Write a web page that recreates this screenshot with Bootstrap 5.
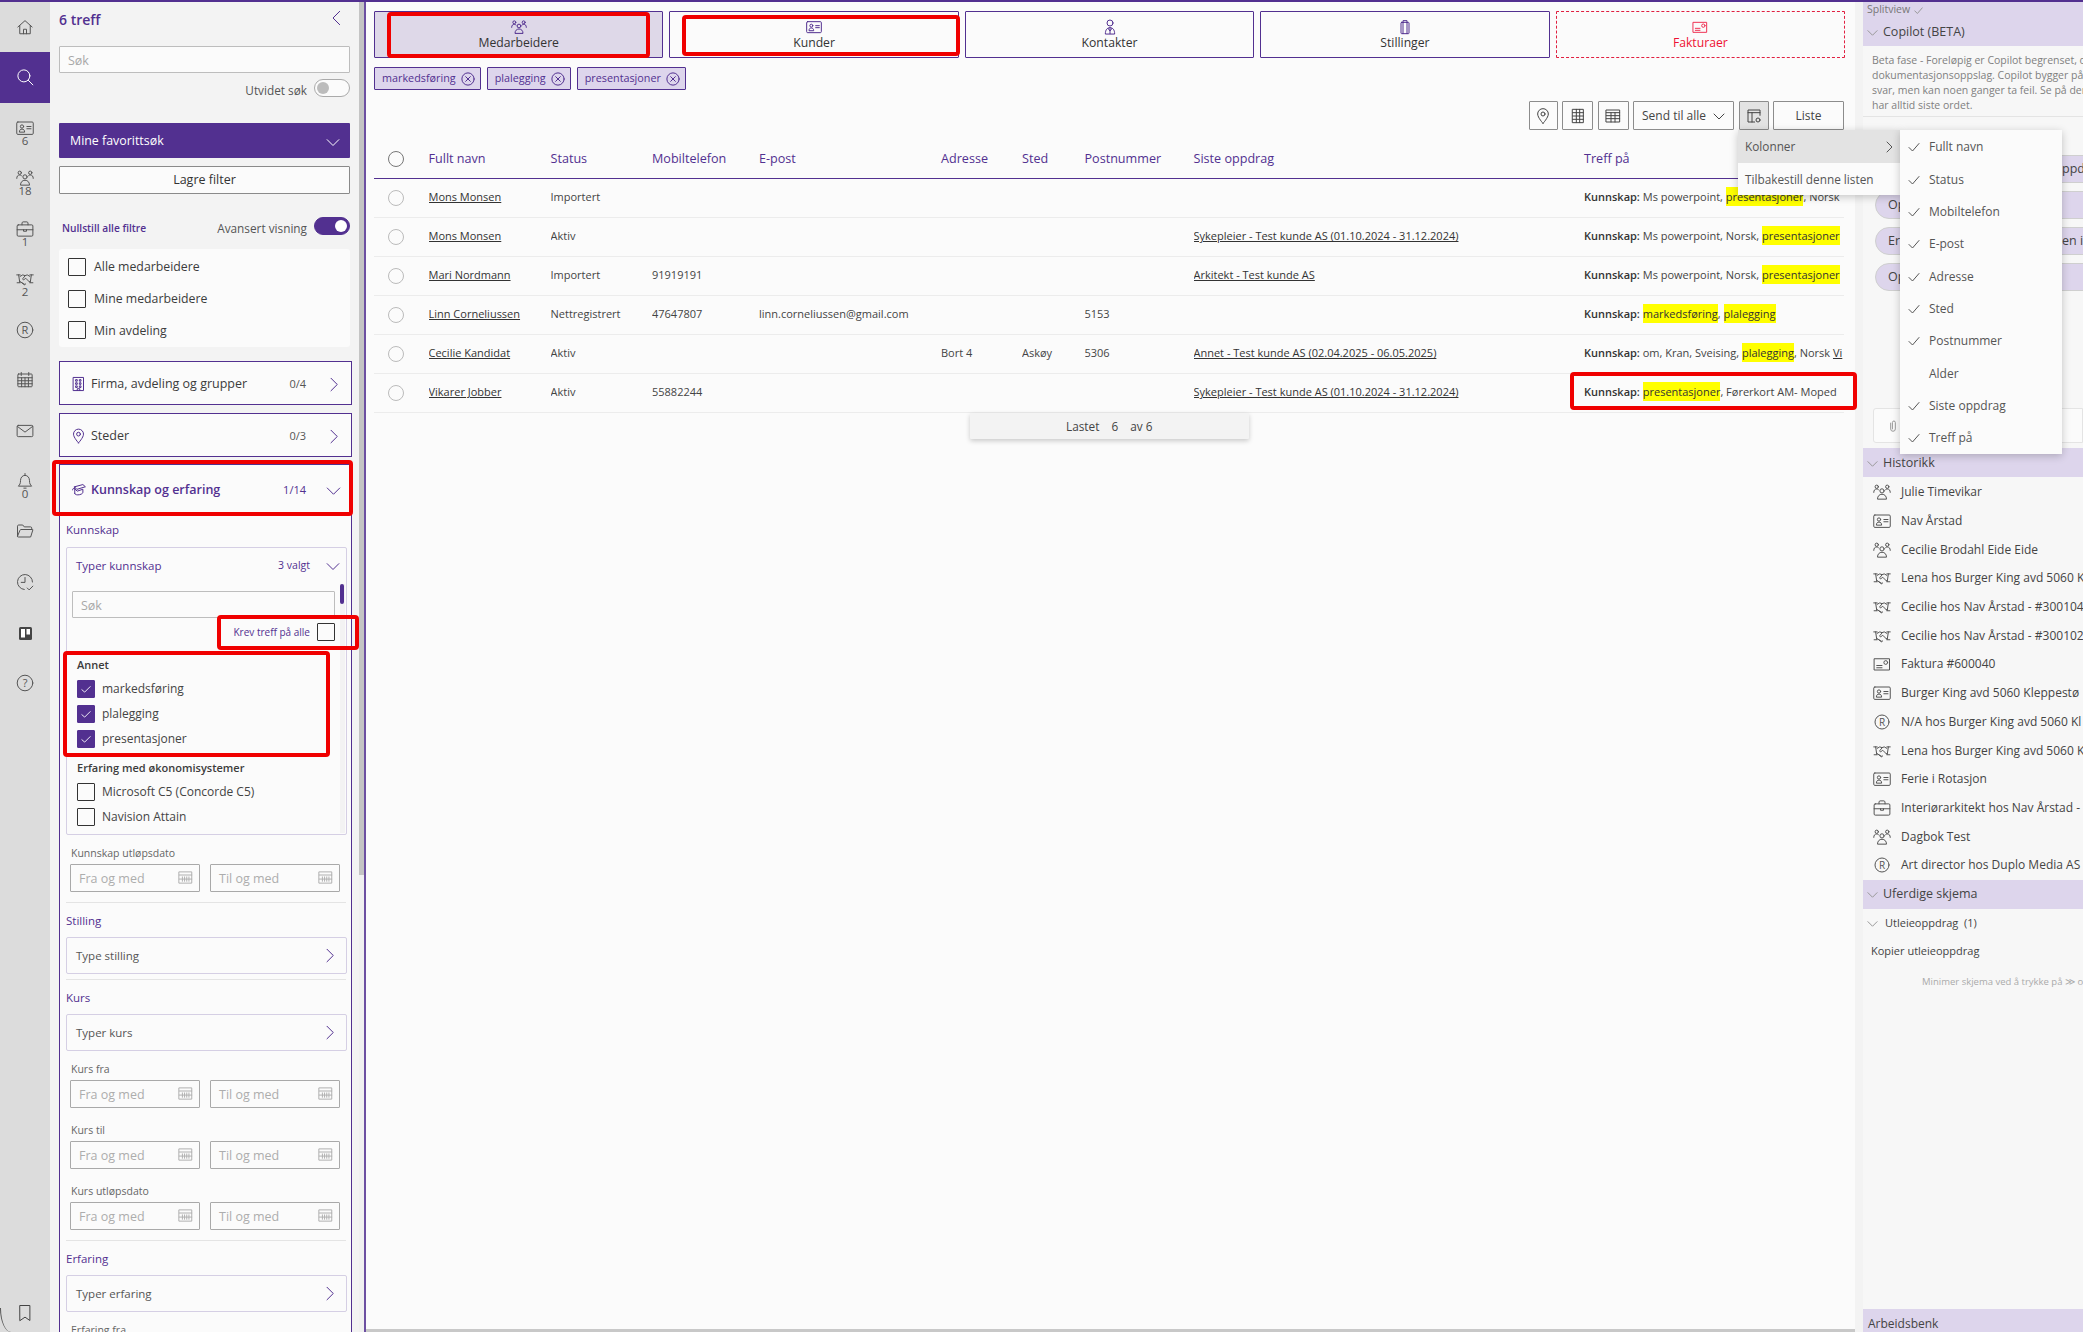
<!DOCTYPE html>
<html lang="nb">
<head>
<meta charset="UTF-8">
<title>Søk</title>
<link href="https://cdn.jsdelivr.net/npm/bootstrap@5.3.3/dist/css/bootstrap.min.css" rel="stylesheet">
<style>
:root { --lilla: #523090; --lilla-lys: #ddd5ec; --tekst: #3c3c3c; }
html, body { height: 100%; }
body { font-family: "Open Sans", "Noto Sans", sans-serif; font-size: 12px; color: var(--tekst); background: #fbfbfb; overflow: hidden; }
svg.ic { fill: none; stroke: currentColor; stroke-width: 1; stroke-linecap: round; stroke-linejoin: round; flex: none; }
symbol path, symbol circle, symbol rect, svg.ic circle { vector-effect: non-scaling-stroke; }
.app-shell { position: relative; width: 2083px; height: 1332px; border-top: 2px solid var(--lilla); overflow: hidden; }

/* venstre meny */
.rail { width: 50px; flex: none; background: #dcdcdc; color: #444; position: relative; }
.rail::after { content: ""; position: absolute; left: 0; bottom: 0; width: 12px; height: 24px; border-left: 1px solid #555; border-bottom-left-radius: 12px 26px; }
.rail-item { height: 50.45px; padding-top: 16px; font-size: 11.5px; line-height: 12px; color: #555; }
.rail-item span { margin-top: -2px; }
.rail-item.active { background: var(--lilla); color: #fff; }
.rail-bottom { margin-top: auto; height: 28px; }

/* filterpanel */
.filter-panel { width: 309px; flex: none; background: #f3f3f3; padding-left: 9px; height: 1330px; overflow: hidden; }
.filter-scroll { width: 5px; flex: none; background: #f0f0f0; position: relative; }
.filter-scroll::before { content: ""; display: block; height: 873px; background: #c4c4c4; }
.filter-line { width: 2px; flex: none; background: var(--lilla); opacity: .85; }
.filter-inner { width: 293px; }
.filter-head { height: 44px; padding-top: 8px; padding-right: 5px; width: 291px; color: var(--lilla); font-size: 14px; font-weight: 600; line-height: 20px; }
.form-control.fs-input { height: 27px; min-height: 0; border-radius: 1px; border: 1px solid #bdbdbd; background: #fbfbfb; font-size: 12.5px; padding: 1px 8px 0; }
.form-control.fs-input::placeholder { color: #a8a8a8; }
.fs-width { width: 291px; }
.switch-row { height: 18px; gap: 7px; font-size: 11.8px; color: #555; }
.sw-first { margin-top: 9px; }
.sw-second { margin-top: 26px; }
.form-switch .form-check-input.fs-switch { width: 36px; height: 18px; margin: 0; float: none; background-color: #fbfbfb; border: 1px solid #aaa; }
.form-switch .form-check-input.fs-switch:checked { background-color: var(--lilla); border-color: var(--lilla); }
.btn.fav-btn { height: 35px; margin-top: 23px; background: var(--lilla); color: #fff; border: 0; border-radius: 1px; font-size: 12.4px; font-weight: 500; padding: 2px 10px 0 11px; }
.btn.save-btn { height: 28px; background: #fbfbfb; color: #333; border: 1px solid #8a8a8a; border-radius: 1px; font-size: 12.5px; font-weight: 500; padding: 1px 0 0; margin-top: 8px; }
.reset-link { color: var(--lilla); font-size: 10.2px; font-weight: 600; padding-left: 3px; text-decoration: none; }
.check-card { height: 98px; background: #fbfbfb; border-radius: 3px; padding: 2px 9px; margin-top: 11px; }
.form-check-input.fs-check { width: 18px; height: 18px; margin: 0; float: none; border: 1px solid #333; border-radius: 1px; background-color: #fbfbfb; flex: none; }
.form-check-input.fs-check:checked { background-color: var(--lilla); border-color: var(--lilla); background-image: url("data:image/svg+xml,%3csvg xmlns='http://www.w3.org/2000/svg' viewBox='0 0 18 18'%3e%3cpath fill='none' stroke='%23fff' d='M4 9.5l3.5 3L14 6'/%3e%3c/svg%3e"); }
.check-row { height: 31.7px; gap: 8px; font-size: 12.3px; padding-top: 1px; }
.check-row input { margin-top: -1px !important; }
.acc-row { height: 44px; border: 1px solid var(--lilla); background: #fbfbfb; padding: 2px 10px 0 11px; font-size: 12.5px; margin-top: 8px; }
.acc-first { margin-top: 14px; }
.acc-count { font-size: 11px; color: #555; width: 30px; text-align: right; margin-right: 20px; }
.acc-open { border: 1px solid var(--lilla); border-bottom: 0; background: #fbfbfb; margin-top: 7px; padding: 0 5px 0 6px; height: 900px; }
.acc-open .acc-head { height: 50px; margin: 0 -5px 0 -6px; padding: 0 10px 0 11px; color: var(--lilla); font-size: 12.5px; font-weight: 600; }
.acc-open .acc-count { color: var(--lilla); font-weight: 400; }
.acc-icon { color: var(--lilla); margin-right: 5px; }
.chev-lilla { color: var(--lilla); }
.sec-title { color: var(--lilla); font-size: 11.5px; font-weight: 500; line-height: 16px; margin-top: 7px; }
.f-box { border: 1px solid #d5cfe4; border-radius: 2px; background: #fbfbfb; margin-top: 8px; width: 281px; }
.f-box-closed { height: 37px; padding: 0 9px 0 9px; font-size: 11.5px; font-weight: 500; color: #555; }
.f-box-open { height: 288px; margin-top: 9px; position: relative; }
.f-box-head { height: 36px; padding: 0 6px 0 9px; color: var(--lilla); font-size: 11.5px; font-weight: 500; }
.f-box-head span:last-of-type { font-size: 10.5px; font-weight: 400; margin-right: 16px; }
.f-track { position: absolute; right: 1px; top: 36px; bottom: 1px; width: 5px; background: #f3f3f3; }
.f-track::before { content: ""; display: block; margin-top: 0; width: 4px; height: 20px; border-radius: 2px; background: var(--lilla); }
.f-body { padding: 7px 0 0 5px; }
.f-body .form-control.fs-input { width: 263px; }
.krev-row { height: 18px; margin-top: 5px; width: 263px; gap: 7px; color: var(--lilla); font-size: 10px; }
.grp-title { font-size: 11px; font-weight: 600; line-height: 16px; padding-left: 5px; }
.grp-first { margin-top: 16px; }
.grp-next { margin-top: 9px; }
.opt-row { height: 25px; gap: 7px; font-size: 12px; padding-left: 5px; color: #444; }
.opt-list { margin-top: 3px; }
.f-label { color: #666; font-size: 10.5px; font-weight: 500; line-height: 16px; margin: 10px 0 0 5px; }
.f-dates { margin: 3px 0 0 4px; gap: 10px; }
.f-date { width: 130px; height: 28px; border: 1px solid #a9a9a9; border-radius: 1px; padding: 2px 6px 0 8px; color: #adadad; font-size: 12.5px; }
.f-date svg { color: #b0b0b0; margin-top: -3px; }
.f-dates + .f-label { margin-top: 14px; }
.f-sep { height: 1px; background: #e4e4e4; width: 280px; margin-top: 10px; }
.f-box + .f-sep { margin-top: 5px; }
.f-sep + .sec-title { margin-top: 10px; }

/* hovedinnhold */
.main-col { width: 1489px; flex: none; padding: 9px 10px 0 8px; background: #fbfbfb; position: relative; }
.tab-row { gap: 6px; }
.tab-btn { flex: 1 1 0; height: 47px; border: 1px solid var(--lilla); border-radius: 1px; background: #fbfbfb; color: #333; font-size: 12.2px; font-weight: 500; padding: 0; line-height: 16px; }
.tab-btn svg { color: var(--lilla); }
.tab-btn.on { background: #ded8e8; }
.tab-btn.tab-red { border: 1px dashed #e02040; color: #ee1133; }
.tab-btn.tab-red svg { color: #ee3355; }
.tag-row { margin-top: 9px; gap: 6px; }
.tag-item { height: 23px; border: 1px solid var(--lilla); background: var(--lilla-lys); color: var(--lilla); border-radius: 1px; padding: 0 5px 0 7px; gap: 5px; font-size: 10.8px; font-weight: 500; }
.tool-row { margin: 11px 1px 0 0; gap: 4.5px; justify-content: flex-end; height: 29px; }
.tool-btn { height: 29px; border: 1px solid #8c8c8c; border-radius: 1px; background: #fbfbfb; color: #444; padding: 0; font-size: 12px; font-weight: 500; }
.tool-btn.on { background: #e3e3e3; }
.tool-pin { width: 29px; }
.tool-sq { width: 31px; }
.tool-send { width: 101px; }
.tool-cols { width: 30px; }
.tool-list { width: 71px; }
.hits-table { table-layout: fixed; width: 1470px; margin: 10px 0 0 0; --bs-table-bg: transparent; font-size: 11px; color: #444; }
.hits-table th { color: var(--lilla); font-weight: 500; height: 38px; padding: 2px 0 0; vertical-align: middle; border-bottom: 1px solid var(--lilla); font-size: 12.6px; white-space: nowrap; }
.hits-table td { height: 39px; padding: 0; vertical-align: middle; border-bottom: 1px solid #ececec; white-space: nowrap; overflow: hidden; }
.hits-table td a { color: #333; }
.radio-dot { display: block; width: 16px; height: 16px; border-radius: 50%; border: 1px solid #bbb; margin-left: 14px; }
th .radio-dot { border-color: #777; margin-top: -2px; }
.hit-mark { background: #ffff00; color: #333; padding: 2px 0; }
.hit-key { font-weight: 600; color: #333; }
.loaded-bar { position: absolute; left: 604px; top: 411px; width: 279px; height: 26px; background: #f3f3f3; box-shadow: 0 2px 5px rgba(0,0,0,.2); font-size: 11.8px; font-weight: 500; color: #444; padding: 1px 0 0 96px; border-radius: 1px; }
.h-scroll { position: absolute; left: 0; right: 0; bottom: 0; height: 3px; background: #c8c8c8; }

/* høyre kolonne */
.gap-strip { width: 8px; flex: none; background: #f3f3f3; }
.side-col { width: 220px; flex: none; background: #f7f7f7; height: 1330px; overflow: hidden; }
.side-head { background: var(--lilla-lys); }
.side-head svg { color: #999; }
.side-head-top { height: 44px; padding-left: 4px; color: #666; }
.side-top-label { height: 16px; font-size: 10.5px; color: #777; gap: 4px; }
.side-title { font-size: 12.5px; color: #444; gap: 5px; padding-top: 1px; }
.copilot-text { height: 71px; padding: 7px 0 0 9px; font-size: 10.5px; line-height: 15px; color: #808080; border-bottom: 1px solid #e4e4e4; white-space: nowrap; }
.chat-area { height: 331px; padding-top: 38px; }
.chat-pills { gap: 8px; padding-left: 12px; }
.chat-pill { height: 28px; width: 300px; border-radius: 14px; border: 1px solid #cfcfcf; background: var(--lilla-lys); padding-left: 12px; font-size: 12.5px; color: #444; white-space: nowrap; }
.chat-pill span:first-child { width: 174px; }
.chat-input { height: 35px; margin: auto 0 5px 10px; border: 1px solid #e4e4e4; background: #fbfbfb; padding-left: 12px; color: #999; border-radius: 3px 0 0 3px; }
.side-bar { height: 29px; padding-left: 4px; }
.hist-list { padding-top: 1px; }
.list-group-item.hist-item { height: 28.7px; padding: 0 0 0 10px; gap: 10px; font-size: 12px; color: #444; white-space: nowrap; border: 0; background: transparent; border-radius: 0; }
.hist-item svg { color: #555; }
.draft-line { font-size: 11px; color: #444; white-space: nowrap; }
.draft-first { height: 29px; padding-left: 4px; gap: 7px; }
.draft-first svg { color: #999; }
.draft-copy { margin-top: 5px; padding-left: 8px; }
.draft-hint { font-size: 9.5px; color: #aaa; white-space: nowrap; padding-left: 59px; margin-top: 16px; }
.work-bar { height: 23px; margin-top: auto; padding: 7px 0 0 5px; font-size: 12px; color: #444; }

/* menyer over innholdet */
.ctx-menu { position: absolute; display: block; margin: 0; padding: 0; border: 0; border-radius: 0; min-width: 0; background: #fbfbfb; box-shadow: 0 2px 8px rgba(0,0,0,.22); }
.ctx-a { left: 1738px; top: 128px; width: 162px; height: 65px; }
.ctx-b { left: 1900px; top: 128px; width: 162px; height: 324px; }
.ctx-a .dropdown-item { height: 32.5px; padding: 2px 5px 0 7px; font-size: 11.8px; color: #555; }
.ctx-a .dropdown-item.on { background: #e3e3e3; }
.ctx-b .dropdown-item { height: 32.35px; padding: 2px 0 0 8px; font-size: 12px; color: #555; gap: 9px; }
.ctx-b .tick-gap { width: 12px; flex: none; }

/* røde markeringer */
.red-mark { position: absolute; border: 4px solid #f00000; border-radius: 4px; pointer-events: none; }
.rm-tab1 { left: 387px; top: 10px; width: 263px; height: 46px; }
.rm-tab2 { left: 682px; top: 13px; width: 278px; height: 41px; }
.rm-hit { left: 1570px; top: 370px; width: 287px; height: 38px; }
.rm-acc { left: 52px; top: 458px; width: 301px; height: 56px; }
.rm-krev { left: 217px; top: 613px; width: 142px; height: 35px; }
.rm-annet { left: 63px; top: 649px; width: 267px; height: 106px; }
</style>
</head>
<body>

<svg width="0" height="0" class="position-absolute">
  <defs>
    <symbol id="i-home" viewBox="0 0 24 24"><path d="M2.500 12L12 3.500 21.500 12M5 10v11h14V10M10 21v-6h4v6"/></symbol>
    <symbol id="i-search" viewBox="0 0 24 24"><circle cx="10.500" cy="10.500" r="8"/><path d="M16.500 16.500l6 6"/></symbol>
    <symbol id="i-card" viewBox="0 0 24 24"><rect x="1" y="4" width="22" height="16.500" rx="1.500"/><circle cx="8" cy="10" r="2.200"/><path d="M4.500 17c0-2.500 1.500-3.500 3.500-3.500s3.500 1 3.500 3.500zM14.500 10h5.500M14.500 13h5.500"/></symbol>
    <symbol id="i-people" viewBox="0 0 24 24"><circle cx="12" cy="10.500" r="2.800"/><path d="M6 21c0-3.500 2.500-6 6-6s6 2.500 6 6z"/><circle cx="5" cy="5" r="2.200"/><path d="M1 12.500c0-3 1.500-4.500 4-4.500 1 0 2 .4 2.600 1.200"/><circle cx="19" cy="5" r="2.200"/><path d="M23 12.500c0-3-1.500-4.500-4-4.500-1 0-2 .4-2.600 1.200"/></symbol>
    <symbol id="i-case" viewBox="0 0 24 24"><rect x="1.500" y="6.500" width="21" height="15" rx="1.500"/><path d="M8 6.500V4C8 3.200 8.700 2.500 9.500 2.500h5c.8 0 1.500.7 1.500 1.500v2.500M1.500 13h21M10 13v2h4v-2"/></symbol>
    <symbol id="i-hands" viewBox="0 0 24 24"><path d="M1 6.500h4.500M3.500 6.500l1.500 10M1.500 17h4M23 6.500h-4.500M20.500 6.500l-1.500 10M22.500 17h-4M5.500 8.500L9 6.500l3 1 3-1 3.500 2M19 15l-1 .5M5 15l6 4.500c1 .7 2-.3 1.500-1.200M8 17l3 2M12 8l-3 3.500c-.6 1 .8 2 1.800 1.200L13 11l5 5"/></symbol>
    <symbol id="i-cal" viewBox="0 0 24 24"><rect x="2.500" y="4" width="19" height="17" rx="1"/><path d="M2.500 9h19M2.500 13h19M2.500 17h19M7.500 9v12M12 9v12M16.500 9v12M7 2v4M17 2v4"/></symbol>
    <symbol id="i-mail" viewBox="0 0 24 24"><rect x="1.500" y="4.500" width="21" height="15" rx="1.500"/><path d="M2 6l10 7.500L22 6"/></symbol>
    <symbol id="i-bell" viewBox="0 0 24 24"><path d="M3.500 18.500c1.500-1.500 2.500-3 2.500-7 0-4 2.500-7 6-7s6 3 6 7c0 4 1 5.500 2.500 7zM12 2v2.500M10.500 21.500h3"/></symbol>
    <symbol id="i-folder" viewBox="0 0 24 24"><path d="M2 19V5.500C2 4.700 2.700 4 3.500 4H9l2 2.500h8.500c.8 0 1.500.7 1.500 1.500v2M2 19.500c0 .5.500.5 1 .5h16.500l3-9.500c.1-.5-.2-.5-.7-.5H6.500c-.5 0-.8.2-1 .6z"/></symbol>
    <symbol id="i-hist" viewBox="0 0 24 24"><path d="M11 22a10 10 0 1 1 11-10M12 6v6.500H7M15 20l2.500 2.500 5-5"/></symbol>
    <symbol id="i-book" viewBox="0 0 24 24"><path d="M5.500 2h13v20L12 17.500 5.500 22z"/></symbol>
    <symbol id="i-build" viewBox="0 0 24 24"><rect x="4" y="1.500" width="16" height="21"/><path d="M8 5h2v2.500H8zM14 5h2v2.500h-2zM8 10h2v2.500H8zM14 10h2v2.500h-2zM8 15h2v2.500H8zM14 15h2v2.500h-2zM10 22.500v-3h4v3"/></symbol>
    <symbol id="i-pin" viewBox="0 0 24 24"><path d="M12 23S4 14.500 4 9a8 8 0 0 1 16 0c0 5.500-8 14-8 14z"/><circle cx="12" cy="9" r="3"/></symbol>
    <symbol id="i-cap" viewBox="0 0 24 24"><path d="M6 6l13-3.500 4 3.500-13 4zM6 6v11M2.500 11c0-2 1.500-3 3.500-3M6 9.500L10 13l9-3v5c0 2-4 4-8 4-3 0-5-1-5-2"/></symbol>
    <symbol id="i-left" viewBox="0 0 24 24"><path d="M16 2L6 12l10 10"/></symbol>
    <symbol id="i-right" viewBox="0 0 24 24"><path d="M8 2l10 10L8 22"/></symbol>
    <symbol id="i-down" viewBox="0 0 24 24"><path d="M2 8l10 10L22 8"/></symbol>
    <symbol id="i-close" viewBox="0 0 24 24"><circle cx="12" cy="12" r="10.500"/><path d="M8 8l8 8M16 8l-8 8"/></symbol>
    <symbol id="i-tick" viewBox="0 0 24 24"><path d="M2 13l7 7L22 5"/></symbol>
    <symbol id="i-minical" viewBox="0 0 24 24"><rect x="2" y="3" width="20" height="18"/><path d="M2 8h20"/><path d="M7 11v7M10.500 11v7M14 11v7M17.500 11v7M2 14.500h20"/></symbol>
    <symbol id="i-grid" viewBox="0 0 24 24"><rect x="4" y="2" width="16" height="20"/><path d="M4 7h16M4 12h16M4 17h16M9.500 2v20M14.500 2v20"/></symbol>
    <symbol id="i-table" viewBox="0 0 24 24"><rect x="2" y="3" width="20" height="18"/><path d="M2 7h20M2 11.500h20M2 16h20M9 7v14M15 7v14"/></symbol>
    <symbol id="i-cols" viewBox="0 0 24 24"><path d="M21 11V3H3v18h10M3 7h18M9 7v14"/><circle cx="18" cy="18" r="3"/></symbol>
    <symbol id="i-clip2" viewBox="0 0 24 24"><path d="M8 7v10a4 4 0 0 0 8 0V6a2.500 2.500 0 0 0-5 0v11"/></symbol>
    <symbol id="i-contact" viewBox="0 0 24 24"><circle cx="12" cy="6" r="4.500"/><path d="M5 22c0-6 3-9 7-9s7 3 7 9zM12 13v9M9 14l3 4 3-4"/></symbol>
    <symbol id="i-clip" viewBox="0 0 24 24"><rect x="6" y="5" width="12" height="17" rx="1"/><path d="M9 5v17M15 5v17M9 5V2.500h6V5"/></symbol>
    <symbol id="i-bill" viewBox="0 0 24 24"><rect x="2" y="5" width="20" height="15"/><path d="M5 14h7M5 17h7"/><circle cx="17" cy="10" r="2.500"/></symbol>
  </defs>
</svg>

<div class="app-shell d-flex">

  <!-- venstre meny -->
  <nav class="rail d-flex flex-column">
    <div class="rail-item d-flex flex-column align-items-center"><svg class="ic" width="18" height="18"><use href="#i-home"/></svg></div>
    <div class="rail-item active d-flex flex-column align-items-center"><svg class="ic" width="18" height="18"><use href="#i-search"/></svg></div>
    <div class="rail-item d-flex flex-column align-items-center"><svg class="ic" width="18" height="18"><use href="#i-card"/></svg><span>6</span></div>
    <div class="rail-item d-flex flex-column align-items-center"><svg class="ic" width="18" height="18"><use href="#i-people"/></svg><span>18</span></div>
    <div class="rail-item d-flex flex-column align-items-center"><svg class="ic" width="18" height="18"><use href="#i-case"/></svg><span>1</span></div>
    <div class="rail-item d-flex flex-column align-items-center"><svg class="ic" width="18" height="18"><use href="#i-hands"/></svg><span>2</span></div>
    <div class="rail-item d-flex flex-column align-items-center"><svg class="ic" width="18" height="18"><circle cx="9" cy="9" r="7.800"/><text x="9" y="13" text-anchor="middle" font-size="11" fill="currentColor" stroke="none">R</text></svg></div>
    <div class="rail-item d-flex flex-column align-items-center"><svg class="ic" width="18" height="18"><use href="#i-cal"/></svg></div>
    <div class="rail-item d-flex flex-column align-items-center"><svg class="ic" width="18" height="18"><use href="#i-mail"/></svg></div>
    <div class="rail-item d-flex flex-column align-items-center"><svg class="ic" width="18" height="18"><use href="#i-bell"/></svg><span>0</span></div>
    <div class="rail-item d-flex flex-column align-items-center"><svg class="ic" width="18" height="18"><use href="#i-folder"/></svg></div>
    <div class="rail-item d-flex flex-column align-items-center"><svg class="ic" width="18" height="18"><use href="#i-hist"/></svg></div>
    <div class="rail-item d-flex flex-column align-items-center"><svg width="13" height="13" class="mt-1"><rect width="13" height="13" rx="1.500" fill="#444"/><rect x="2" y="2" width="4" height="8.500" fill="#fff"/><rect x="7.500" y="2" width="3.500" height="5.500" fill="#fff"/></svg></div>
    <div class="rail-item d-flex flex-column align-items-center"><svg class="ic" width="18" height="18"><circle cx="9" cy="9" r="7.800"/><text x="9" y="13" text-anchor="middle" font-size="11" fill="currentColor" stroke="none">?</text></svg></div>
    <div class="rail-bottom d-flex justify-content-center"><svg class="ic" width="18" height="18"><use href="#i-book"/></svg></div>
  </nav>

  <!-- filter -->
  <aside class="filter-panel">
    <div class="filter-head d-flex justify-content-between">
      <span>6 treff</span>
      <svg class="ic" width="16" height="16"><use href="#i-left"/></svg>
    </div>
    <input type="text" class="form-control fs-input fs-width" placeholder="Søk">
    <div class="switch-row sw-first fs-width d-flex align-items-center justify-content-end">
      <span>Utvidet søk</span>
      <div class="form-check form-switch m-0 p-0 d-flex"><input class="form-check-input fs-switch" type="checkbox"></div>
    </div>
    <button class="btn fav-btn fs-width d-flex align-items-center justify-content-between">Mine favorittsøk <svg class="ic" width="14" height="14"><use href="#i-down"/></svg></button>
    <button class="btn save-btn fs-width d-block">Lagre filter</button>
    <div class="switch-row sw-second fs-width d-flex align-items-center">
      <a href="#" class="reset-link me-auto">Nullstill alle filtre</a>
      <span>Avansert visning</span>
      <div class="form-check form-switch m-0 p-0 d-flex"><input class="form-check-input fs-switch" type="checkbox" checked></div>
    </div>
    <div class="check-card fs-width">
      <label class="check-row d-flex align-items-center"><input class="form-check-input fs-check" type="checkbox">Alle medarbeidere</label>
      <label class="check-row d-flex align-items-center"><input class="form-check-input fs-check" type="checkbox">Mine medarbeidere</label>
      <label class="check-row d-flex align-items-center"><input class="form-check-input fs-check" type="checkbox">Min avdeling</label>
    </div>
    <div class="filter-inner">
      <div class="acc-row acc-first d-flex align-items-center">
        <svg class="ic acc-icon" width="15" height="16"><use href="#i-build"/></svg>
        <span class="me-auto">Firma, avdeling og grupper</span>
        <span class="acc-count">0/4</span>
        <svg class="ic chev-lilla" width="15" height="15"><use href="#i-right"/></svg>
      </div>
      <div class="acc-row d-flex align-items-center">
        <svg class="ic acc-icon" width="15" height="16"><use href="#i-pin"/></svg>
        <span class="me-auto">Steder</span>
        <span class="acc-count">0/3</span>
        <svg class="ic chev-lilla" width="15" height="15"><use href="#i-right"/></svg>
      </div>
      <div class="acc-open">
        <div class="acc-head d-flex align-items-center">
          <svg class="ic acc-icon" width="15" height="15"><use href="#i-cap"/></svg>
          <span class="me-auto">Kunnskap og erfaring</span>
          <span class="acc-count">1/14</span>
          <svg class="ic" width="15" height="15"><use href="#i-down"/></svg>
        </div>
        <div class="sec-title">Kunnskap</div>
        <div class="f-box f-box-open">
          <div class="f-box-head d-flex align-items-center justify-content-between">
            <span class="me-auto">Typer kunnskap</span>
            <span>3 valgt</span>
            <svg class="ic" width="14" height="14"><use href="#i-down"/></svg>
          </div>
          <div class="f-track"></div>
          <div class="f-body">
            <input type="text" class="form-control fs-input" placeholder="Søk">
            <div class="krev-row d-flex align-items-center justify-content-end">Krev treff på alle <input class="form-check-input fs-check" type="checkbox"></div>
            <div class="grp-title grp-first">Annet</div>
            <div class="opt-list">
              <label class="opt-row d-flex align-items-center"><input class="form-check-input fs-check" type="checkbox" checked>markedsføring</label>
              <label class="opt-row d-flex align-items-center"><input class="form-check-input fs-check" type="checkbox" checked>plalegging</label>
              <label class="opt-row d-flex align-items-center"><input class="form-check-input fs-check" type="checkbox" checked>presentasjoner</label>
            </div>
            <div class="grp-title grp-next">Erfaring med økonomisystemer</div>
            <div class="opt-list">
              <label class="opt-row d-flex align-items-center"><input class="form-check-input fs-check" type="checkbox">Microsoft C5 (Concorde C5)</label>
              <label class="opt-row d-flex align-items-center"><input class="form-check-input fs-check" type="checkbox">Navision Attain</label>
            </div>
          </div>
        </div>
        <div class="f-label">Kunnskap utløpsdato</div>
        <div class="f-dates d-flex">
          <div class="f-date d-flex align-items-center justify-content-between">Fra og med <svg class="ic" width="15" height="15"><use href="#i-minical"/></svg></div>
          <div class="f-date d-flex align-items-center justify-content-between">Til og med <svg class="ic" width="15" height="15"><use href="#i-minical"/></svg></div>
        </div>
        <div class="f-sep"></div>
        <div class="sec-title">Stilling</div>
        <div class="f-box f-box-closed d-flex align-items-center justify-content-between">Type stilling <svg class="ic chev-lilla" width="15" height="15"><use href="#i-right"/></svg></div>
        <div class="f-sep"></div>
        <div class="sec-title">Kurs</div>
        <div class="f-box f-box-closed d-flex align-items-center justify-content-between">Typer kurs <svg class="ic chev-lilla" width="15" height="15"><use href="#i-right"/></svg></div>
        <div class="f-label">Kurs fra</div>
        <div class="f-dates d-flex">
          <div class="f-date d-flex align-items-center justify-content-between">Fra og med <svg class="ic" width="15" height="15"><use href="#i-minical"/></svg></div>
          <div class="f-date d-flex align-items-center justify-content-between">Til og med <svg class="ic" width="15" height="15"><use href="#i-minical"/></svg></div>
        </div>
        <div class="f-label">Kurs til</div>
        <div class="f-dates d-flex">
          <div class="f-date d-flex align-items-center justify-content-between">Fra og med <svg class="ic" width="15" height="15"><use href="#i-minical"/></svg></div>
          <div class="f-date d-flex align-items-center justify-content-between">Til og med <svg class="ic" width="15" height="15"><use href="#i-minical"/></svg></div>
        </div>
        <div class="f-label">Kurs utløpsdato</div>
        <div class="f-dates d-flex">
          <div class="f-date d-flex align-items-center justify-content-between">Fra og med <svg class="ic" width="15" height="15"><use href="#i-minical"/></svg></div>
          <div class="f-date d-flex align-items-center justify-content-between">Til og med <svg class="ic" width="15" height="15"><use href="#i-minical"/></svg></div>
        </div>
        <div class="f-sep"></div>
        <div class="sec-title">Erfaring</div>
        <div class="f-box f-box-closed d-flex align-items-center justify-content-between">Typer erfaring <svg class="ic chev-lilla" width="15" height="15"><use href="#i-right"/></svg></div>
        <div class="f-label">Erfaring fra</div>
      </div>
    </div>
  </aside>
  <div class="filter-scroll"></div>
  <div class="filter-line"></div>

  <!-- hovedinnhold -->
  <main class="main-col">
    <div class="tab-row d-flex">
      <button class="tab-btn on d-flex flex-column align-items-center justify-content-center"><svg class="ic" width="16" height="16"><use href="#i-people"/></svg>Medarbeidere</button>
      <button class="tab-btn d-flex flex-column align-items-center justify-content-center"><svg class="ic" width="16" height="16"><use href="#i-card"/></svg>Kunder</button>
      <button class="tab-btn d-flex flex-column align-items-center justify-content-center"><svg class="ic" width="16" height="16"><use href="#i-contact"/></svg>Kontakter</button>
      <button class="tab-btn d-flex flex-column align-items-center justify-content-center"><svg class="ic" width="16" height="16"><use href="#i-clip"/></svg>Stillinger</button>
      <button class="tab-btn tab-red d-flex flex-column align-items-center justify-content-center"><svg class="ic" width="16" height="16"><use href="#i-bill"/></svg>Fakturaer</button>
    </div>
    <div class="tag-row d-flex">
      <span class="tag-item d-flex align-items-center">markedsføring <svg class="ic" width="14" height="14"><use href="#i-close"/></svg></span>
      <span class="tag-item d-flex align-items-center">plalegging <svg class="ic" width="14" height="14"><use href="#i-close"/></svg></span>
      <span class="tag-item d-flex align-items-center">presentasjoner <svg class="ic" width="14" height="14"><use href="#i-close"/></svg></span>
    </div>
    <div class="tool-row d-flex">
      <button class="tool-btn tool-pin"><svg class="ic" width="16" height="16"><use href="#i-pin"/></svg></button>
      <button class="tool-btn tool-sq"><svg class="ic" width="16" height="16"><use href="#i-grid"/></svg></button>
      <button class="tool-btn tool-sq"><svg class="ic" width="16" height="16"><use href="#i-table"/></svg></button>
      <button class="tool-btn tool-send d-flex align-items-center justify-content-between px-2">Send til alle <svg class="ic" width="12" height="12"><use href="#i-down"/></svg></button>
      <button class="tool-btn tool-cols on"><svg class="ic" width="16" height="16"><use href="#i-cols"/></svg></button>
      <button class="tool-btn tool-list">Liste</button>
    </div>
    <table class="table hits-table">
      <colgroup><col style="width:54.5px"><col style="width:122px"><col style="width:101.5px"><col style="width:107px"><col style="width:182px"><col style="width:81px"><col style="width:62.5px"><col style="width:109px"><col style="width:390.5px"><col style="width:260px"></colgroup>
      <thead>
        <tr><th><span class="radio-dot"></span></th><th>Fullt navn</th><th>Status</th><th>Mobiltelefon</th><th>E-post</th><th>Adresse</th><th>Sted</th><th>Postnummer</th><th>Siste oppdrag</th><th>Treff på</th></tr>
      </thead>
      <tbody>
        <tr><td><span class="radio-dot"></span></td><td><a href="#">Mons Monsen</a></td><td>Importert</td><td></td><td></td><td></td><td></td><td></td><td></td><td><span class="hit-key">Kunnskap:</span> Ms powerpoint, <span class="hit-mark">presentasjoner</span>, Norsk</td></tr>
        <tr><td><span class="radio-dot"></span></td><td><a href="#">Mons Monsen</a></td><td>Aktiv</td><td></td><td></td><td></td><td></td><td></td><td><a href="#">Sykepleier - Test kunde AS (01.10.2024 - 31.12.2024)</a></td><td><span class="hit-key">Kunnskap:</span> Ms powerpoint, Norsk, <span class="hit-mark">presentasjoner</span></td></tr>
        <tr><td><span class="radio-dot"></span></td><td><a href="#">Mari Nordmann</a></td><td>Importert</td><td>91919191</td><td></td><td></td><td></td><td></td><td><a href="#">Arkitekt - Test kunde AS</a></td><td><span class="hit-key">Kunnskap:</span> Ms powerpoint, Norsk, <span class="hit-mark">presentasjoner</span></td></tr>
        <tr><td><span class="radio-dot"></span></td><td><a href="#">Linn Corneliussen</a></td><td>Nettregistrert</td><td>47647807</td><td>linn.corneliussen@gmail.com</td><td></td><td></td><td>5153</td><td></td><td><span class="hit-key">Kunnskap:</span> <span class="hit-mark">markedsføring</span>, <span class="hit-mark">plalegging</span></td></tr>
        <tr><td><span class="radio-dot"></span></td><td><a href="#">Cecilie Kandidat</a></td><td>Aktiv</td><td></td><td></td><td>Bort 4</td><td>Askøy</td><td>5306</td><td><a href="#">Annet - Test kunde AS (02.04.2025 - 06.05.2025)</a></td><td><span class="hit-key">Kunnskap:</span> om, Kran, Sveising, <span class="hit-mark">plalegging</span>, Norsk <a href="#">Vi</a></td></tr>
        <tr><td><span class="radio-dot"></span></td><td><a href="#">Vikarer Jobber</a></td><td>Aktiv</td><td>55882244</td><td></td><td></td><td></td><td></td><td><a href="#">Sykepleier - Test kunde AS (01.10.2024 - 31.12.2024)</a></td><td><span class="hit-key">Kunnskap:</span> <span class="hit-mark">presentasjoner</span>, Førerkort AM- Moped</td></tr>
      </tbody>
    </table>
    <div class="loaded-bar d-flex align-items-center gap-2"><span>Lastet</span><span class="ms-1">6</span><span class="ms-1">av 6</span></div>
    <div class="h-scroll"></div>
  </main>
  <div class="gap-strip"></div>

  <!-- høyre kolonne -->
  <aside class="side-col d-flex flex-column">
    <div class="side-head side-head-top">
      <div class="side-top-label d-flex align-items-center">Splitview <svg class="ic" width="9" height="9"><use href="#i-tick"/></svg></div>
      <div class="side-title d-flex align-items-center mt-1"><svg class="ic" width="11" height="11"><use href="#i-down"/></svg>Copilot (BETA)</div>
    </div>
    <div class="copilot-text">
      Beta fase - Foreløpig er Copilot begrenset, o<br>
      dokumentasjonsoppslag. Copilot bygger på<br>
      svar, men kan noen ganger ta feil. Se på den<br>
      har alltid siste ordet.
    </div>
    <div class="chat-area d-flex flex-column">
      <div class="chat-pills d-flex flex-column">
        <div class="chat-pill d-flex align-items-center"><span>Op</span><span>ppd</span></div>
        <div class="chat-pill d-flex align-items-center"><span>Op</span></div>
        <div class="chat-pill d-flex align-items-center"><span>Er</span><span>en i</span></div>
        <div class="chat-pill d-flex align-items-center"><span>Op</span></div>
      </div>
      <div class="chat-input d-flex align-items-center"><svg class="ic" width="14" height="14"><use href="#i-clip2"/></svg></div>
    </div>
    <div class="side-head side-bar side-title d-flex align-items-center"><svg class="ic" width="11" height="11"><use href="#i-down"/></svg>Historikk</div>
    <div class="list-group hist-list">
      <div class="list-group-item hist-item d-flex align-items-center"><svg class="ic" width="18" height="18"><use href="#i-people"/></svg>Julie Timevikar</div>
      <div class="list-group-item hist-item d-flex align-items-center"><svg class="ic" width="18" height="18"><use href="#i-card"/></svg>Nav Årstad</div>
      <div class="list-group-item hist-item d-flex align-items-center"><svg class="ic" width="18" height="18"><use href="#i-people"/></svg>Cecilie Brodahl Eide Eide</div>
      <div class="list-group-item hist-item d-flex align-items-center"><svg class="ic" width="18" height="18"><use href="#i-hands"/></svg>Lena hos Burger King avd 5060 K</div>
      <div class="list-group-item hist-item d-flex align-items-center"><svg class="ic" width="18" height="18"><use href="#i-hands"/></svg>Cecilie hos Nav Årstad - #300104</div>
      <div class="list-group-item hist-item d-flex align-items-center"><svg class="ic" width="18" height="18"><use href="#i-hands"/></svg>Cecilie hos Nav Årstad - #300102</div>
      <div class="list-group-item hist-item d-flex align-items-center"><svg class="ic" width="18" height="18"><use href="#i-bill"/></svg>Faktura #600040</div>
      <div class="list-group-item hist-item d-flex align-items-center"><svg class="ic" width="18" height="18"><use href="#i-card"/></svg>Burger King avd 5060 Kleppestø</div>
      <div class="list-group-item hist-item d-flex align-items-center"><svg class="ic" width="18" height="18"><circle cx="9" cy="9" r="7"/><text x="9" y="12.500" text-anchor="middle" font-size="10" fill="currentColor" stroke="none">R</text></svg>N/A hos Burger King avd 5060 Kl</div>
      <div class="list-group-item hist-item d-flex align-items-center"><svg class="ic" width="18" height="18"><use href="#i-hands"/></svg>Lena hos Burger King avd 5060 K</div>
      <div class="list-group-item hist-item d-flex align-items-center"><svg class="ic" width="18" height="18"><use href="#i-card"/></svg>Ferie i Rotasjon</div>
      <div class="list-group-item hist-item d-flex align-items-center"><svg class="ic" width="18" height="18"><use href="#i-case"/></svg>Interiørarkitekt hos Nav Årstad -</div>
      <div class="list-group-item hist-item d-flex align-items-center"><svg class="ic" width="18" height="18"><use href="#i-people"/></svg>Dagbok Test</div>
      <div class="list-group-item hist-item d-flex align-items-center"><svg class="ic" width="18" height="18"><circle cx="9" cy="9" r="7"/><text x="9" y="12.500" text-anchor="middle" font-size="10" fill="currentColor" stroke="none">R</text></svg>Art director hos Duplo Media AS</div>
    </div>
    <div class="side-head side-bar side-title d-flex align-items-center"><svg class="ic" width="11" height="11"><use href="#i-down"/></svg>Uferdige skjema</div>
    <div class="draft-line draft-first d-flex align-items-center"><svg class="ic" width="11" height="11"><use href="#i-down"/></svg>Utleieoppdrag &nbsp;(1)</div>
    <div class="draft-line draft-copy">Kopier utleieoppdrag</div>
    <div class="draft-hint">Minimer skjema ved å trykke på ≫ o</div>
    <div class="side-head work-bar d-flex align-items-center">Arbeidsbenk</div>
  </aside>

  <!-- kontekstmenyer -->
  <div class="dropdown-menu ctx-menu ctx-a">
    <a class="dropdown-item on d-flex align-items-center justify-content-between" href="#">Kolonner <svg class="ic" width="12" height="12"><use href="#i-right"/></svg></a>
    <a class="dropdown-item d-flex align-items-center" href="#">Tilbakestill denne listen</a>
  </div>
  <div class="dropdown-menu ctx-menu ctx-b">
    <a class="dropdown-item d-flex align-items-center" href="#"><svg class="ic" width="12" height="12"><use href="#i-tick"/></svg>Fullt navn</a>
    <a class="dropdown-item d-flex align-items-center" href="#"><svg class="ic" width="12" height="12"><use href="#i-tick"/></svg>Status</a>
    <a class="dropdown-item d-flex align-items-center" href="#"><svg class="ic" width="12" height="12"><use href="#i-tick"/></svg>Mobiltelefon</a>
    <a class="dropdown-item d-flex align-items-center" href="#"><svg class="ic" width="12" height="12"><use href="#i-tick"/></svg>E-post</a>
    <a class="dropdown-item d-flex align-items-center" href="#"><svg class="ic" width="12" height="12"><use href="#i-tick"/></svg>Adresse</a>
    <a class="dropdown-item d-flex align-items-center" href="#"><svg class="ic" width="12" height="12"><use href="#i-tick"/></svg>Sted</a>
    <a class="dropdown-item d-flex align-items-center" href="#"><svg class="ic" width="12" height="12"><use href="#i-tick"/></svg>Postnummer</a>
    <a class="dropdown-item d-flex align-items-center" href="#"><span class="tick-gap"></span>Alder</a>
    <a class="dropdown-item d-flex align-items-center" href="#"><svg class="ic" width="12" height="12"><use href="#i-tick"/></svg>Siste oppdrag</a>
    <a class="dropdown-item d-flex align-items-center" href="#"><svg class="ic" width="12" height="12"><use href="#i-tick"/></svg>Treff på</a>
  </div>

  <!-- røde markeringer fra skjermbildet -->
  <div class="red-mark rm-tab1"></div>
  <div class="red-mark rm-tab2"></div>
  <div class="red-mark rm-hit"></div>
  <div class="red-mark rm-acc"></div>
  <div class="red-mark rm-krev"></div>
  <div class="red-mark rm-annet"></div>
</div>

<script src="https://cdn.jsdelivr.net/npm/bootstrap@5.3.3/dist/js/bootstrap.bundle.min.js"></script>
</body>
</html>
